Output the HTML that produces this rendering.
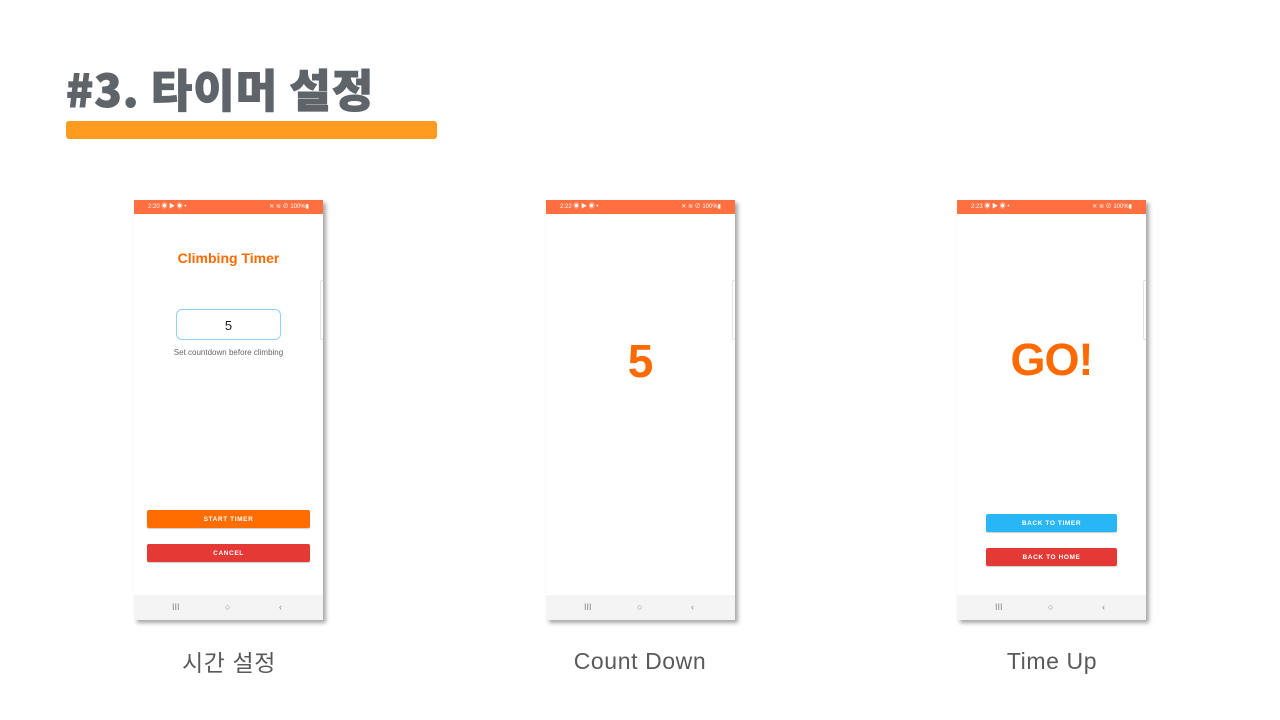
<!DOCTYPE html>
<html><head><meta charset="utf-8"><style>
*{margin:0;padding:0;box-sizing:border-box}
body{width:1280px;height:720px;background:#fff;position:relative;overflow:hidden;font-family:"Liberation Sans","Noto Sans CJK KR",sans-serif}
.a{position:absolute}
.title{left:66px;top:58px;font-size:45px;font-weight:900;color:#5f646b;letter-spacing:1px;font-family:"Noto Sans CJK KR","Liberation Sans",sans-serif;line-height:60px;-webkit-text-stroke:1px #5f646b}
.bar{left:66px;top:121px;width:371px;height:18px;background:#ff9b1f;border-radius:3px}
.ph{position:absolute;top:200px;width:189px;height:420px;background:#fff;box-shadow:3px 3px 4px rgba(0,0,0,.35)}
.sb{position:absolute;left:0;top:0;width:189px;height:14px;background:#ff6f40;color:#fff;font-size:6px;line-height:14px}
.sb .l{position:absolute;left:14px}.sb .r{position:absolute;right:14px}
.nav{position:absolute;left:0;bottom:0;width:189px;height:25px;background:#f4f4f4;color:#888;font-size:9px}
.nav span{position:absolute;top:7px}
.scr{position:absolute;right:0;top:80px;width:3px;height:60px;border:1px solid #e4e4e4;border-right:none;border-radius:2px 0 0 2px}
.btn{position:absolute;height:18px;color:#fff;font-size:6.5px;font-weight:bold;letter-spacing:.6px;text-align:center;line-height:19px;border-radius:2px;box-shadow:0 1px 1px rgba(0,0,0,.2)}
.lbl{position:absolute;font-size:23px;color:#5a5a5a;text-align:center;width:300px;letter-spacing:.6px}
</style></head><body>
<div class="a title">#3. 타이머 설정</div>
<div class="a bar"></div>

<div class="ph" style="left:134px">
 <div class="sb"><span class="l">2:20 ◉ ▶ ◉ •</span><span class="r">✕ ≋ ⊘ 100%▮</span></div>
 <div class="a" style="left:0;width:189px;top:50px;text-align:center;color:#ff6a00;font-size:14px;font-weight:bold">Climbing Timer</div>
 <div class="a" style="left:42px;top:109px;width:105px;height:31px;border:1px solid #8fd3f5;border-radius:6px;text-align:center;line-height:32px;font-size:13px;color:#222">5</div>
 <div class="a" style="left:0;width:189px;top:148px;text-align:center;color:#666;font-size:8px">Set countdown before climbing</div>
 <div class="btn" style="left:13px;top:310px;width:163px;background:#ff6d00">START TIMER</div>
 <div class="btn" style="left:13px;top:344px;width:163px;background:#e53935">CANCEL</div>
 <div class="scr"></div>
 <div class="nav"><span style="left:38px">III</span><span style="left:91px">○</span><span style="left:145px">‹</span></div>
</div>

<div class="ph" style="left:546px">
 <div class="sb"><span class="l">2:22 ◉ ▶ ◉ •</span><span class="r">✕ ≋ ⊘ 100%▮</span></div>
 <div class="a" style="left:0;width:189px;top:133px;text-align:center;color:#ff6a00;font-size:46px;font-weight:bold;line-height:56px">5</div>
 <div class="scr"></div>
 <div class="nav"><span style="left:38px">III</span><span style="left:91px">○</span><span style="left:145px">‹</span></div>
</div>

<div class="ph" style="left:957px">
 <div class="sb"><span class="l">2:23 ◉ ▶ ◉ •</span><span class="r">✕ ≋ ⊘ 100%▮</span></div>
 <div class="a" style="left:0;width:189px;top:132px;text-align:center;color:#ff6a00;font-size:45px;font-weight:bold;line-height:56px;letter-spacing:-1px">GO!</div>
 <div class="btn" style="left:29px;top:314px;width:131px;background:#29b6f6">BACK TO TIMER</div>
 <div class="btn" style="left:29px;top:348px;width:131px;background:#e53935">BACK TO HOME</div>
 <div class="scr"></div>
 <div class="nav"><span style="left:38px">III</span><span style="left:91px">○</span><span style="left:145px">‹</span></div>
</div>

<div class="lbl" style="left:79px;top:644px">시간 설정</div>
<div class="lbl" style="left:490px;top:648px">Count Down</div>
<div class="lbl" style="left:902px;top:648px">Time Up</div>
</body></html>
